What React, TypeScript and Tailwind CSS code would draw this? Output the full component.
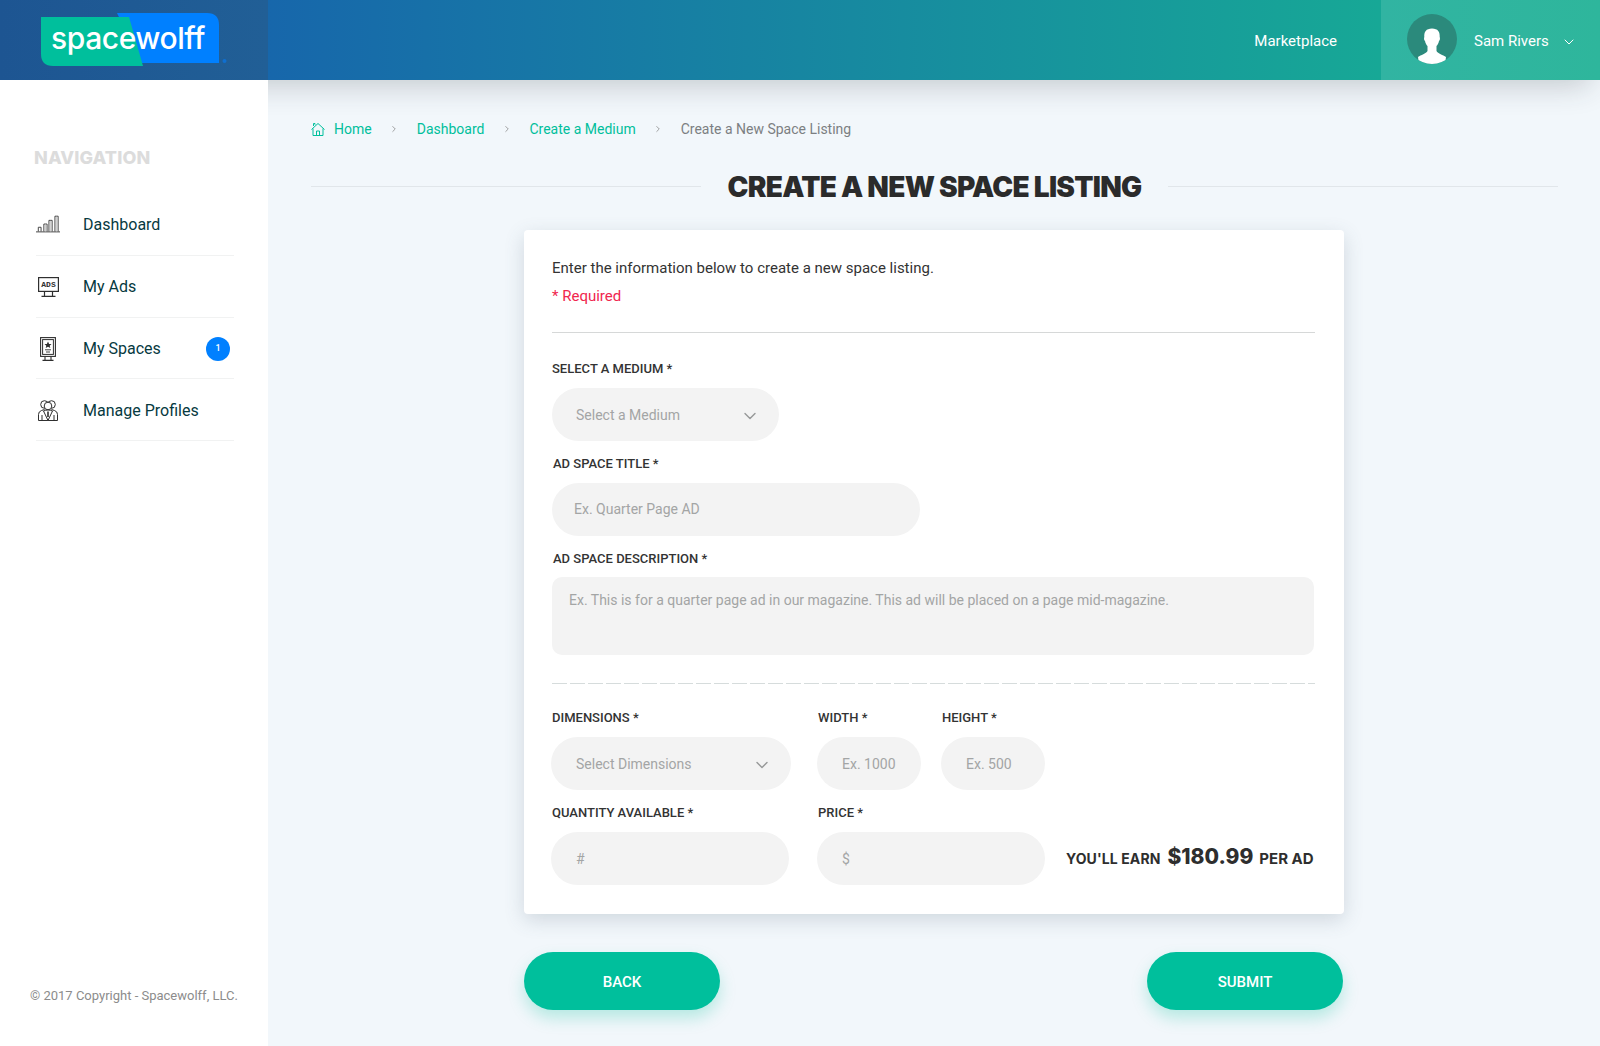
import { ChevronDown, ChevronRight } from 'lucide-react';

const heavy = "font-['Inter',sans-serif]";

function Logo() {
  return (
    <div className="relative h-[54px] w-[190px]">
      <svg width="190" height="54" viewBox="0 0 190 54" className="absolute left-0 top-0">
        <path d="M76 0H166Q178 0 178 12V50H100Z" fill="#0080ff" />
        <path d="M0 4H88L102 53H12Q0 53 0 41Z" fill="#00bf9c" />
        <circle cx="183.500" cy="48" r="2" fill="#0f6fd0" />
      </svg>
      <span className="absolute left-[10px] top-[7px] text-[30px] font-medium leading-[36px] tracking-[-0.4px] text-white font-['Inter',sans-serif]">
        spacewolff
      </span>
    </div>
  );
}

function Avatar() {
  return (
    <svg width="50" height="50" viewBox="0 0 50 50">
      <defs>
        <clipPath id="avatar-clip">
          <circle cx="25" cy="25" r="25" />
        </clipPath>
      </defs>
      <circle cx="25" cy="25" r="25" fill="#2b8a7c" />
      <path
        clipPath="url(#avatar-clip)"
        d="M25 14.500C19 14.500 17 18 17.300 23C16.800 24 17 26.500 18 27C18.500 29.500 19.500 31 20.500 32V37C19 39.500 14 41 11 43L12 50H38L39 43C36 41 31 39.500 29.500 37V32C30.500 31 31.500 29.500 32 27C33 26.500 33.200 24 32.700 23C33 18 31 14.500 25 14.500Z"
        fill="#fff"
      />
    </svg>
  );
}

function DashIcon() {
  return (
    <svg width="26" height="19" viewBox="0 0 26 19" fill="none" stroke="#3a3a3a" strokeWidth="1">
      <path d="M0 17.500H26M2.500 17V12.500H5.500V17M8.500 17V9H12V17M14 17V5H17.500V17M20.500 17V.5H24V17" />
      <path d="M10.500 9.500V17M16 5.500V17M22.500 1V17" stroke="#bdbdbd" />
    </svg>
  );
}

function AdsIcon() {
  return (
    <svg width="21" height="20" viewBox="0 0 21 20" fill="none" stroke="#2f2f2f" strokeWidth="1.200">
      <rect x=".6" y=".6" width="19.800" height="13.800" />
      <path d="M6.500 14.500V19.400M14.500 14.500V19.400M3.500 19.400H17.500" />
      <text
        x="10.500"
        y="10.300"
        textAnchor="middle"
        stroke="none"
        fill="#2f2f2f"
        fontSize="8"
        fontWeight="700"
        fontFamily="'Liberation Mono', monospace"
      >
        ADS
      </text>
    </svg>
  );
}

function SpaceIcon() {
  return (
    <svg width="16" height="24" viewBox="0 0 16 24" fill="none" stroke="#2f2f2f" strokeWidth="1.100">
      <rect x=".6" y=".6" width="14.800" height="18.800" />
      <rect x="2.600" y="2.600" width="10.800" height="14.800" strokeWidth="1" />
      <path d="M5 19.500V23.400M11 19.500V23.400M2.500 23.400H13.500" />
      <path d="M8 4.500L9.100 7H11.500L9.700 8.700L10.300 11L8 9.800L5.700 11L6.300 8.700L4.500 7H6.900Z" fill="#2f2f2f" stroke="none" />
      <path d="M5 12.800H11M6 15H10" strokeWidth=".9" />
    </svg>
  );
}

function ProfilesIcon() {
  return (
    <svg width="20" height="21" viewBox="0 0 20 21" fill="none" stroke="#2f2f2f" strokeWidth="1">
      <circle cx="6.500" cy="4.500" r="3.800" />
      <circle cx="13.500" cy="4.500" r="3.800" />
      <circle cx="10" cy="6" r="3.800" fill="#fff" />
      <path d="M.5 20.500V14.500Q.5 11.500 3.500 10.500L6.500 9.500M19.500 20.500V14.500Q19.500 11.500 16.500 10.500L13.500 9.500M.5 20.500H19.500" />
      <path d="M5.500 11L10 20.500L14.500 11Q12.500 10 10 10Q7.500 10 5.500 11Z" fill="#fff" />
      <path d="M4 15V20.500M16 15V20.500" />
      <path d="M10 11.500V17" strokeWidth="1.600" />
    </svg>
  );
}

function HomeIcon() {
  return (
    <svg width="14" height="15" viewBox="0 0 14 15" fill="none" stroke="#00bf9c" strokeWidth="1">
      <path d="M.5 7.500L7 1.500L13.500 7.500M2 6.500V13.500H12V6.500M5.500 13.500V9H8.500V13.500M2.500 4V1.500H4V2.800" />
    </svg>
  );
}

const navItems = [
  { label: 'Dashboard', icon: <DashIcon />, rowClass: '' },
  { label: 'My Ads', icon: <AdsIcon />, rowClass: 'pt-[2px]' },
  { label: 'My Spaces', icon: <SpaceIcon />, rowClass: 'pt-[2px]', badge: '1' },
  { label: 'Manage Profiles', icon: <ProfilesIcon />, rowClass: 'pt-[3px]' },
];

function Sidebar() {
  return (
    <aside className="relative z-10 flex h-[966px] w-[268px] shrink-0 flex-col bg-white">
      <div className={`ml-[34px] mt-[68px] text-[18px] font-extrabold leading-[20px] tracking-[0.1px] text-[#dcdcdc] ${heavy}`}>
        NAVIGATION
      </div>
      <nav className="ml-[36px] mt-[26.500px] w-[198px]">
        {navItems.map((item) => (
          <div key={item.label} className={`flex h-[61.500px] items-center border-b border-[#f1f2f2] ${item.rowClass}`}>
            <div className="flex w-[47px] shrink-0 justify-start">
              <div className="flex w-[24px] justify-center">{item.icon}</div>
            </div>
            <span className="flex-1 text-[16px] text-[#073a3f]">{item.label}</span>
            {item.badge && (
              <span className="mr-[4px] flex h-[24px] w-[24px] items-center justify-center rounded-full bg-[#0080ff] text-[9px] font-medium text-white">
                {item.badge}
              </span>
            )}
          </div>
        ))}
      </nav>
      <div className="mb-[41px] ml-[30px] mt-auto text-[13px] leading-[18px] text-[#8c8c8c]">
        © 2017 Copyright - Spacewolff, LLC.
      </div>
    </aside>
  );
}

function Label({ text }: { text: string }) {
  return <label className="block text-[13px] font-medium leading-[16px] text-[#333]">{text}</label>;
}

function Pill({ placeholder, className, select }: { placeholder: string; className: string; select?: boolean }) {
  return (
    <div className={`flex h-[53px] items-center justify-between rounded-full bg-[#f3f3f3] text-[14px] text-[#a3a5a5] ${className}`}>
      <span>{placeholder}</span>
      {select && <ChevronDown size={20} strokeWidth={1.700} className="text-[#979999]" />}
    </div>
  );
}

function Crumb({ text }: { text: string }) {
  return <span className="text-[#00bf9c]">{text}</span>;
}

function Sep() {
  return (
    <span className="flex w-[45px] justify-center text-[#8f8f8f]">
      <ChevronRight size={10} strokeWidth={2} />
    </span>
  );
}

export default function App() {
  return (
    <div className="h-[1046px] w-[1600px] overflow-hidden bg-[#f2f7fb] font-['Roboto',sans-serif]">
      <header className="relative flex h-[80px] bg-[linear-gradient(90deg,#1757b0,#17b592)] shadow-[0_15px_30px_-10px_rgba(40,50,60,0.24)]">
        <div className="flex w-[268px] shrink-0 items-center bg-[linear-gradient(90deg,#1d5592,#215f96)] pl-[41px]">
          <Logo />
        </div>
        <div className="flex flex-1 items-center justify-end pr-[44px] pt-[2px] text-[15px] text-white">Marketplace</div>
        <div className="flex w-[219px] shrink-0 items-center bg-[linear-gradient(90deg,#31b4a2,#2eb69c)] pl-[26px] text-[15px] text-white">
          <div className="mb-[2px] h-[50px]">
            <Avatar />
          </div>
          <span className="ml-[17px] pt-[2px]">Sam Rivers</span>
          <ChevronDown size={16} strokeWidth={1.500} className="ml-[12px] mt-[4px]" />
        </div>
      </header>
      <div className="flex">
        <Sidebar />
        <main className="relative flex-1 pl-[43px] pr-[42px]">
          <div className="mt-[40px] flex h-[18px] items-center text-[14px]">
            <span className="mr-[9px]">
              <HomeIcon />
            </span>
            <Crumb text="Home" />
            <Sep />
            <Crumb text="Dashboard" />
            <Sep />
            <Crumb text="Create a Medium" />
            <Sep />
            <span className="text-[#7c7f82]">Create a New Space Listing</span>
          </div>
          <div className="mt-[30px] flex h-[36px] items-center">
            <div className="h-px flex-1 bg-[#e1e6ea]" />
            <h1 className={`px-[27px] pt-[2px] text-[28px] font-black leading-[36px] tracking-[-0.72px] text-[#2b2b2b] ${heavy}`}>
              CREATE A NEW SPACE LISTING
            </h1>
            <div className="h-px flex-1 bg-[#e1e6ea]" />
          </div>
          <div className="ml-[213px] mt-[26px] h-[684px] w-[820px] rounded-[4px] bg-white px-[28px] pt-[28px] shadow-[0_6px_20px_rgba(70,90,110,0.2)]">
            <p className="text-[15px] leading-[20px] text-[#333]">Enter the information below to create a new space listing.</p>
            <p className="mt-[8px] text-[15px] leading-[20px] text-[#f0264e]">* Required</p>
            <div className="mt-[26px] h-px w-[763px] bg-[#d6d8d8]" />
            <div className="mt-[28px]">
              <Label text="SELECT A MEDIUM *" />
              <Pill placeholder="Select a Medium" select className="mt-[11px] w-[227px] pl-[24px] pr-[19px] pt-[2px]" />
            </div>
            <div className="mt-[15px]">
              <div className="pl-[1px]">
                <Label text="AD SPACE TITLE *" />
              </div>
              <Pill placeholder="Ex. Quarter Page AD" className="mt-[11px] w-[368px] pl-[22px]" />
            </div>
            <div className="mt-[15px]">
              <div className="pl-[1px]">
                <Label text="AD SPACE DESCRIPTION *" />
              </div>
              <div className="mt-[10px] h-[78px] w-[762px] rounded-[10px] bg-[#f3f3f3] px-[17px] py-[14px] text-[14px] leading-[18px] text-[#a3a5a5]">
                Ex. This is for a quarter page ad in our magazine. This ad will be placed on a page mid-magazine.
              </div>
            </div>
            <div className="mt-[28px] h-px w-[763px] bg-[repeating-linear-gradient(90deg,#d6dcdc_0,#d6dcdc_15px,transparent_15px,transparent_18px)]" />
            <div className="mt-[26px] flex">
              <div className="w-[266px]">
                <Label text="DIMENSIONS *" />
                <Pill placeholder="Select Dimensions" select className="-ml-[1px] mt-[11px] w-[240px] pl-[25px] pr-[19px] pt-[2px]" />
              </div>
              <div className="w-[124px]">
                <Label text="WIDTH *" />
                <Pill placeholder="Ex. 1000" className="-ml-[1px] mt-[11px] w-[104px] pl-[25px] pt-[2px]" />
              </div>
              <div className="w-[104px]">
                <Label text="HEIGHT *" />
                <Pill placeholder="Ex. 500" className="-ml-[1px] mt-[11px] w-[104px] pl-[25px] pt-[2px]" />
              </div>
            </div>
            <div className="mt-[15px] flex">
              <div className="w-[266px]">
                <Label text="QUANTITY AVAILABLE *" />
                <Pill placeholder="#" className="-ml-[1px] mt-[11px] w-[238px] pl-[25px] pt-[2px]" />
              </div>
              <div className="w-[248px]">
                <Label text="PRICE *" />
                <Pill placeholder="$" className="-ml-[1px] mt-[11px] w-[228px] pl-[25px] pt-[2px]" />
              </div>
              <div className={`flex h-[80px] items-end whitespace-nowrap pb-[16px] font-bold text-[#2e2e2e] ${heavy}`}>
                <span className="text-[14px] leading-[20px] tracking-[0.1px]">YOU'LL EARN</span>
                <span className="ml-[7px] text-[21px] font-extrabold leading-[25px]">$180.99</span>
                <span className="ml-[6px] text-[15px] leading-[20px]">PER AD</span>
              </div>
            </div>
          </div>
          <div className="ml-[213px] mt-[38px] flex w-[819px] justify-between">
            <button className="h-[58px] w-[196px] rounded-full bg-[#00bf9c] pt-[2px] text-[15px] font-medium text-white shadow-[0_8px_16px_rgba(0,191,156,0.25)]">
              BACK
            </button>
            <button className="h-[58px] w-[196px] rounded-full bg-[#00bf9c] pt-[2px] text-[15px] font-medium text-white shadow-[0_8px_16px_rgba(0,191,156,0.25)]">
              SUBMIT
            </button>
          </div>
        </main>
      </div>
    </div>
  );
}
